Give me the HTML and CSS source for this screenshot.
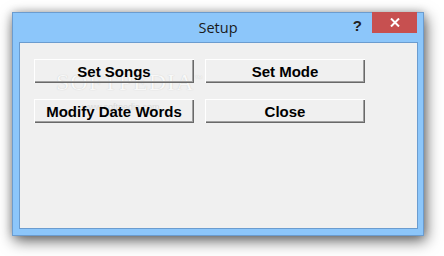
FILE: index.html
```html
<!doctype html>
<html>
  <head>
    <title>Setup</title>
    <meta charset='utf-8'>
    <link rel="stylesheet" href="styles.css">
  </head>
  <body>
    <div class='wn-window'>
      <div class='wn-titlebar'>
        <span class='wn-title'>Setup</span>
        <span class='wn-help'>?</span>
        <span class='wn-close'>
          <svg width='10' height='9' viewBox='0 0 10 9'>
            <path d='M1 0.5 L9 8.5 M9 0.5 L1 8.5' stroke='#fff' stroke-width='2'/>
          </svg>
        </span>
      </div>
      <div class='wn-client'>
        <div class='wm-mark'>SOFTPEDIA<sup>™</sup></div>
        <div class='wm-url'>www.softpedia.com</div>
        <div class='st-buttons'>
          <button class='st-button'>Set Songs</button>
          <button class='st-button'>Set Mode</button>
          <button class='st-button'>Modify Date Words</button>
          <button class='st-button'>Close</button>
        </div>
      </div>
    </div>
  </body>
</html>
```
FILE: styles.css
```css
html,
body {
  height: 100%;
}
body {
  margin: 0;
  padding-top: 12px;
  box-sizing: border-box;
  background-color: #fff;
  font-family: 'Liberation Sans', Arial, sans-serif;
  overflow: hidden;
}
.wn-window {
  position: relative;
  margin-left: 12px;
  width: 410px;
  height: 222px;
  border: 1px solid #6b9ccf;
  background-color: #8cc6fa;
  box-shadow: 2px 5px 14px rgba(0, 0, 0, 0.6), 0 0 8px rgba(0, 0, 0, 0.2);
}
.wn-titlebar {
  display: flex;
  align-items: flex-start;
  height: 29px;
}
.wn-title {
  position: absolute;
  left: 0;
  right: 0;
  top: 5px;
  text-align: center;
  font-family: 'Open Sans', 'Noto Sans', sans-serif;
  font-size: 14.5px;
  color: #1a1a1a;
}
.wn-help {
  margin: 4px 10px 0 auto;
  font-weight: bold;
  font-size: 15px;
  color: #222;
  position: relative;
}
.wn-close {
  display: flex;
  align-items: center;
  justify-content: center;
  width: 45px;
  height: 21px;
  margin: -1px 6px 0 0;
  background-color: #c75050;
  position: relative;
}
.wn-client {
  position: relative;
  margin: 0 5px 0 6px;
  height: 185px;
  border: 1px solid #6b9ccf;
  background-color: #f0f0f0;
}
.st-buttons {
  position: relative;
  display: grid;
  grid-template-columns: 160px 160px;
  grid-auto-rows: 24px;
  column-gap: 11px;
  row-gap: 16px;
  padding: 16px 0 0 14px;
}
.st-button {
  margin: 0;
  padding: 0;
  border: 0;
  background-color: transparent;
  font-family: 'Liberation Sans', Arial, sans-serif;
  font-weight: bold;
  font-size: 15px;
  color: #000;
  box-shadow: inset 1px 1px #fff, inset -1px -1px #696969, inset -2px -2px #a0a0a0;
}
.wm-mark {
  position: absolute;
  left: 36px;
  top: 26px;
  font-family: 'Liberation Serif', serif;
  font-size: 24px;
  letter-spacing: 1px;
  color: #f8f8f8;
  text-shadow: 0 0 1px #c4c4c4;
}
.wm-mark sup {
  font-size: 8px;
  font-family: 'Liberation Sans', sans-serif;
}
.wm-url {
  position: absolute;
  left: 62px;
  top: 59px;
  font-size: 9px;
  color: #dadada;
}
```
